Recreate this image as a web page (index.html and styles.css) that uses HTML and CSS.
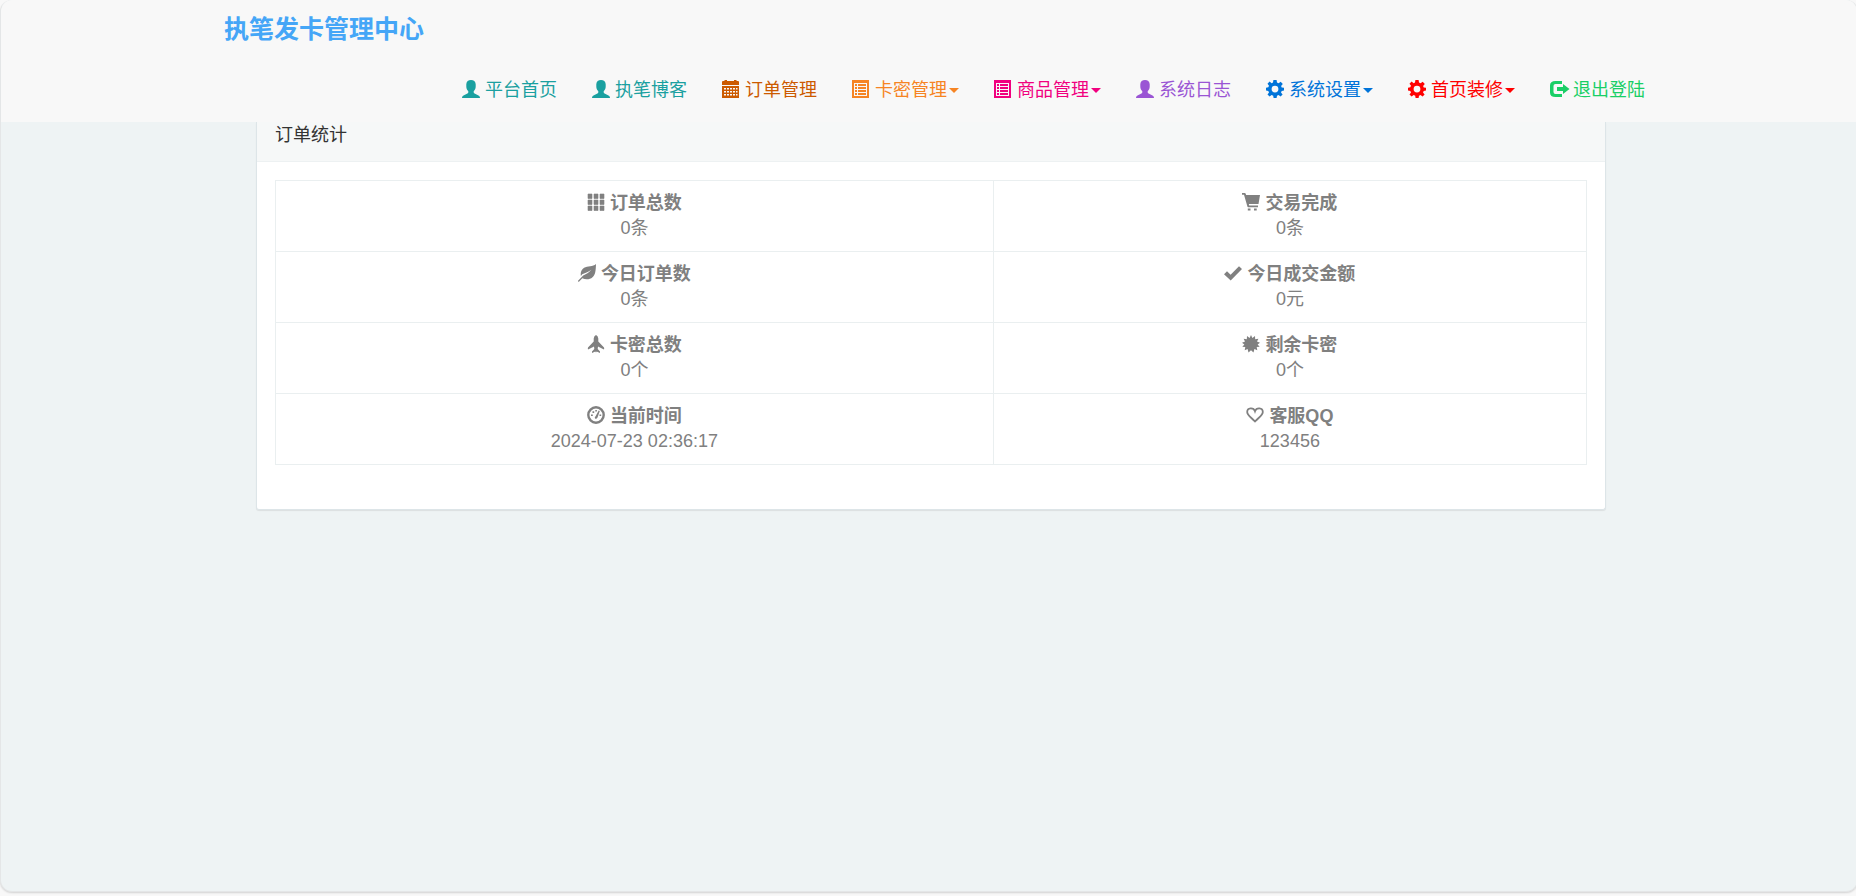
FILE: index.html
```html
<!DOCTYPE html>
<html lang="zh-CN">
<head>
<meta charset="utf-8">
<meta name="viewport" content="width=device-width, initial-scale=1">
<title>执笔发卡管理中心</title>
<link rel="stylesheet" href="styles.css">
</head>
<body>
<svg class="sprite" aria-hidden="true">
  <symbol id="i-user" viewBox="0 0 18 18"><path d="M9 0C6.400 0 4.300 1.500 4.300 4.200V6.500C4.300 8.600 5.100 10.200 6.300 11.200V12.300C6.300 13 6 13.300 5.400 13.600L1.500 15.400C.5 15.900 0 16.600 0 18H18C18 16.600 17.500 15.900 16.500 15.400L12.600 13.600C12 13.300 11.700 13 11.700 12.300V11.200C12.900 10.200 13.700 8.600 13.700 6.500V4.200C13.700 1.500 11.600 0 9 0Z"/></symbol>
  <symbol id="i-calendar" viewBox="0 0 18 18"><path fill-rule="evenodd" d="M0 2Q0 1 1 1H2.500V0H5V1H12V0H14.500V1H16Q17 1 17 2V5H0ZM0 6H17V18H0ZM2 8V9.500H4V8ZM5 8V9.500H7V8ZM8 8V9.500H10V8ZM11 8V9.500H13V8ZM14 8V9.500H15.500V8ZM2 11V12.500H4V11ZM5 11V12.500H7V11ZM8 11V12.500H10V11ZM11 11V12.500H13V11ZM14 11V12.500H15.500V11ZM2 14V15.500H4V14ZM5 14V15.500H7V14ZM8 14V15.500H10V14ZM11 14V15.500H13V14ZM14 14V15.500H15.500V14Z"/></symbol>
  <symbol id="i-list" viewBox="0 0 18 18"><path fill-rule="evenodd" d="M0 0H17V18H0ZM2 3V16H15V3ZM3 4H5V6H3ZM6 4H14V6H6ZM3 7H5V9H3ZM6 7H14V9H6ZM3 10H5V12H3ZM6 10H14V12H6ZM3 13H5V15H3ZM6 13H14V15H6Z"/></symbol>
  <symbol id="i-cog" viewBox="0 0 18 18"><path fill-rule="evenodd" d="M7.400 0H10.600L11 2.600L12.600 3.300L14.700 1.700L16.800 3.900L15.100 5.900L15.700 7.400L18 7.800V10.500L15.700 10.900L15 12.500L16.600 14.600L14.600 16.600L12.500 15.100L11 15.700L10.600 18H7.600L7.200 15.700L5.600 15.100L3.600 16.600L1.500 14.500L3 12.500L2.300 10.900L0 10.500V7.700L2.300 7.300L3 5.800L1.500 3.800L3.600 1.600L5.600 3.200L7 2.600ZM9 5.700A3.400 3.400 0 1 0 9 12.500A3.400 3.400 0 1 0 9 5.700Z"/></symbol>
  <symbol id="i-logout" viewBox="0 0 20 18"><path d="M12 1H5.500Q0 1 0 5.500V12.500Q0 17 5.500 17H12V14H5.500Q3.500 14 3.500 12V6Q3.500 4 5.500 4H12ZM13 4L19.500 9L13 14V11H7V7H13Z"/></symbol>
  <symbol id="i-grid" viewBox="0 0 18 18"><path d="M1 1H5V5.500H1ZM7 1H11V5.500H7ZM13 1H17V5.500H13ZM1 7H5V11.500H1ZM7 7H11V11.500H7ZM13 7H17V11.500H13ZM1 13H5V17.500H1ZM7 13H11V17.500H7ZM13 13H17V17.500H13Z" stroke="currentColor" stroke-width=".6" stroke-linejoin="round"/></symbol>
  <symbol id="i-cart" viewBox="0 0 18 18"><path d="M0 0H2.800Q3.400 0 3.700.8L4.100 2H18L16.500 11H6.800L7.200 12.600H16V14.200H6Q5.600 14.200 5.400 13.600L2 1.800H0ZM5.800 15.500H8.500V17.500H5.800ZM12 15.500H14.700V17.500H12Z"/></symbol>
  <symbol id="i-leaf" viewBox="0 0 18 18"><path d="M18 0C17.700 7 17.500 10.500 14.500 13.300C12 15.600 7.500 16 4.300 14.200L1.200 17.400Q.7 18 .2 17.500Q-.2 17 .3 16.500L5.200 11.500Q9.500 10.300 13.500 5.800Q9 9 4.200 10.300L2.900 11.900C2.200 8.600 3.400 5.500 6.100 3.800C9.500 1.700 15 3 18 0Z"/></symbol>
  <symbol id="i-ok" viewBox="0 0 18 18"><path d="M0 10.200L3 7.200L6.600 10.800L15 2.200L18 5L6.700 16.500Z"/></symbol>
  <symbol id="i-plane" viewBox="0 0 18 18"><path d="M9 0Q7 .5 6.700 3.500V6.500L1 12.500Q.6 13.300 1 14.500L7 11.500L7.300 14L5 16.500V18L8.300 16.500L9 17.500L9.700 16.500L13 18V16.500L10.700 14L11 11.500L17 14.500Q17.400 13.300 17 12.500L11.300 6.500V3.500Q11 .5 9 0Z"/></symbol>
  <symbol id="i-burst" viewBox="0 0 18 18"><path d="M9 0L10.400 2.900L13 1L13.200 4.200L16.400 3.700L15 6.600L18 7.800L15.600 9.400L17.700 11.800L14.700 12.100L15.300 15.200L12.400 14.100L11.500 17.500L9 15.200L6.500 17.500L5.600 14.100L2.700 15.200L3.300 12.100L.3 11.800L2.400 9.400L0 7.800L3 6.600L1.600 3.700L4.800 4.200L5 1L7.600 2.900Z"/></symbol>
  <symbol id="i-dash" viewBox="0 0 18 18"><circle cx="9" cy="9" r="7.700" fill="none" stroke="currentColor" stroke-width="2.400"/><path d="M4 8.500H5.800V10H4ZM5.500 5.300H7.200V6.900H5.500ZM8.300 4H9.900V5.600H8.300ZM12.500 8.500H14.200V10H12.500ZM11.700 4.500L12.800 5L10.500 11.500Q9.500 13.300 8 12.400Q7.300 11.300 8.600 10.200Z"/></symbol>
  <symbol id="i-heart" viewBox="0 0 18 18"><path fill="none" stroke="currentColor" stroke-width="1.800" d="M9 5.200C7.600 1.200 1.200 1.300 1.200 6C1.200 9.400 5 11.200 9 15.500C13 11.200 16.800 9.400 16.800 6C16.800 1.300 10.400 1.200 9 5.200Z"/></symbol>
</svg>
<div class="shell">
  <header class="topbar">
    <div class="topbar-inner">
      <a class="brand" href="#">执笔发卡管理中心</a>
      <nav class="nav">
        <a class="teal" href="#"><svg class="icon"><use href="#i-user"/></svg>平台首页</a>
        <a class="teal" href="#"><svg class="icon"><use href="#i-user"/></svg>执笔博客</a>
        <a class="brown" href="#"><svg class="icon"><use href="#i-calendar"/></svg>订单管理</a>
        <a class="orange" href="#"><svg class="icon"><use href="#i-list"/></svg>卡密管理<span class="caret"></span></a>
        <a class="pink" href="#"><svg class="icon"><use href="#i-list"/></svg>商品管理<span class="caret"></span></a>
        <a class="purple" href="#"><svg class="icon"><use href="#i-user"/></svg>系统日志</a>
        <a class="blue" href="#"><svg class="icon"><use href="#i-cog"/></svg>系统设置<span class="caret"></span></a>
        <a class="red" href="#"><svg class="icon"><use href="#i-cog"/></svg>首页装修<span class="caret"></span></a>
        <a class="green" href="#"><svg class="icon icon-wide"><use href="#i-logout"/></svg>退出登陆</a>
      </nav>
    </div>
  </header>
  <main class="content">
    <section class="panel">
      <h1 class="panel-title">订单统计</h1>
      <div class="panel-body">
        <table class="stats">
          <colgroup><col class="col-main"><col></colgroup>
          <tbody>
            <tr>
              <td><strong><svg class="icon"><use href="#i-grid"/></svg>订单总数</strong><span>0条</span></td>
              <td><strong><svg class="icon"><use href="#i-cart"/></svg>交易完成</strong><span>0条</span></td>
            </tr>
            <tr>
              <td><strong><svg class="icon"><use href="#i-leaf"/></svg>今日订单数</strong><span>0条</span></td>
              <td><strong><svg class="icon"><use href="#i-ok"/></svg>今日成交金额</strong><span>0元</span></td>
            </tr>
            <tr>
              <td><strong><svg class="icon"><use href="#i-plane"/></svg>卡密总数</strong><span>0个</span></td>
              <td><strong><svg class="icon"><use href="#i-burst"/></svg>剩余卡密</strong><span>0个</span></td>
            </tr>
            <tr>
              <td><strong><svg class="icon"><use href="#i-dash"/></svg>当前时间</strong><span>2024-07-23 02:36:17</span></td>
              <td><strong><svg class="icon"><use href="#i-heart"/></svg>客服QQ</strong><span>123456</span></td>
            </tr>
          </tbody>
        </table>
      </div>
    </section>
  </main>
</div>
</body>
</html>
```
FILE: styles.css
```css
* { box-sizing: border-box; }

body {
  margin: 0;
  height: 100vh;
  padding-bottom: 4px;
  overflow: hidden;
  background: #f8f8f8;
  color: #333;
  font-family: "Liberation Sans", "Noto Sans CJK SC", sans-serif;
  font-size: 18px;
  font-weight: 400;
  line-height: 25px;
}

a { color: inherit; text-decoration: none; }

.sprite { display: none; }

.icon {
  flex: none;
  width: 18px;
  height: 18px;
  margin-bottom: 3px;
  fill: currentColor;
}

.icon-wide {
  width: 20px;
  margin-right: -2px;
}

.shell {
  height: 100%;
  margin-right: -2px;
  overflow: hidden;
  background: #eef3f4;
  border: 1px solid #e4e6e7;
  border-top: 0;
  border-radius: 12px;
  box-shadow: 0 1px 2px rgba(0, 0, 0, .15);
}

.topbar { background: #f8f8f8; }

.topbar-inner {
  display: flex;
  flex-direction: column;
  max-width: 1470px;
  margin: 0 auto;
  padding: 0 19px 19px 30px;
}

.brand {
  align-self: flex-start;
  padding: 12px 0 16px;
  color: #45a6f7;
  font-size: 25px;
  font-weight: 700;
  line-height: 34px;
}

.nav {
  display: flex;
  justify-content: flex-end;
  flex-wrap: wrap;
  gap: 16px 35px;
  padding-top: 16px;
}

.nav a {
  display: flex;
  align-items: center;
  gap: 5px;
}

.caret {
  width: 10px;
  height: 5px;
  margin-left: -3px;
  background: currentColor;
  clip-path: polygon(0 0, 100% 0, 50% 100%);
}

.teal { color: #1aa0a0; }
.brown { color: #cc5a00; }
.orange { color: #f68423; }
.pink { color: #f1007f; }
.purple { color: #9a55d4; }
.blue { color: #0074d9; }
.red { color: #f00; }
.green { color: #19cf66; }

.content { padding: 0 16px 16px 20px; }

.panel {
  max-width: 1350px;
  margin: 0 auto;
  background: #fff;
  border: 1px solid #dde5e8;
  border-top: 0;
  border-radius: 0 0 3px 3px;
  box-shadow: 0 1px 1px rgba(0, 0, 0, .08);
}

.panel-title {
  margin: 0;
  padding: 1px 18px 13px;
  background: #f6f8f8;
  border-bottom: 1px solid #edf1f2;
  font-size: 18px;
  font-weight: 400;
}

.panel-body { padding: 18px 18px 44px; }

.stats {
  width: 100%;
  table-layout: fixed;
  border-collapse: collapse;
  color: #808080;
  text-align: center;
}

.col-main { width: 54.75%; }

.stats td {
  padding: 10px;
  border: 1px solid #eaeff0;
}

.stats strong {
  display: flex;
  justify-content: center;
  align-items: center;
  gap: 5px;
  font-weight: 700;
}

.stats span { display: block; }
```
